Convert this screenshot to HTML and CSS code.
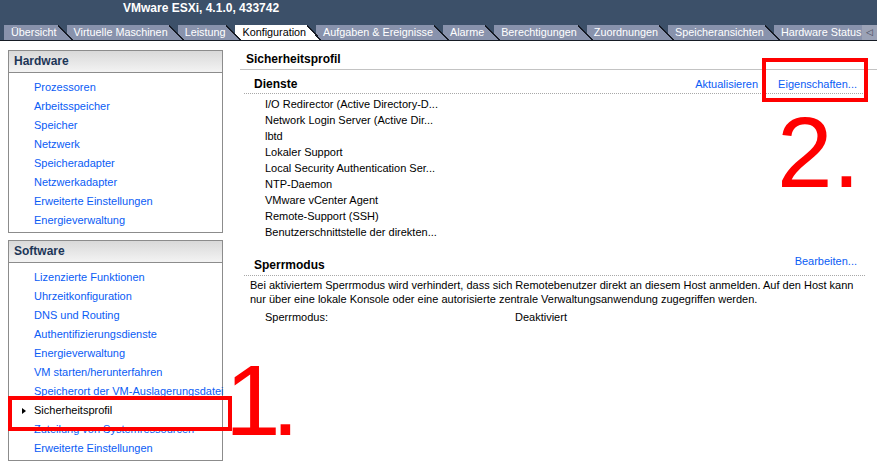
FILE: index.html
```html
<!DOCTYPE html>
<html lang="de">
<head>
  <meta charset="UTF-8">
  <meta name="viewport" content="width=device-width, initial-scale=1.0">
  <title>Sicherheitsprofil</title>
  <link rel="stylesheet" href="styles.css">
</head>
<body>
  <header class="topbar">
    <div class="app-title">VMware ESXi, 4.1.0, 433742</div>
    <div class="tabstrip">
      <ul class="tabs">
        <li class="tab">Übersicht</li>
        <li class="tab">Virtuelle Maschinen</li>
        <li class="tab">Leistung</li>
        <li class="tab active">Konfiguration</li>
        <li class="tab">Aufgaben &amp; Ereignisse</li>
        <li class="tab">Alarme</li>
        <li class="tab">Berechtigungen</li>
        <li class="tab">Zuordnungen</li>
        <li class="tab">Speicheransichten</li>
        <li class="tab">Hardware Status</li>
      </ul>
      <div class="tab-scroll">◁</div>
    </div>
  </header>

  <div class="page">
    <aside class="sidebar">
      <div class="box">
        <h2 class="box-title">Hardware</h2>
        <ul class="box-list">
          <li><a href="#">Prozessoren</a></li>
          <li><a href="#">Arbeitsspeicher</a></li>
          <li><a href="#">Speicher</a></li>
          <li><a href="#">Netzwerk</a></li>
          <li><a href="#">Speicheradapter</a></li>
          <li><a href="#">Netzwerkadapter</a></li>
          <li><a href="#">Erweiterte Einstellungen</a></li>
          <li><a href="#">Energieverwaltung</a></li>
        </ul>
      </div>
      <div class="box">
        <h2 class="box-title">Software</h2>
        <ul class="box-list">
          <li><a href="#">Lizenzierte Funktionen</a></li>
          <li><a href="#">Uhrzeitkonfiguration</a></li>
          <li><a href="#">DNS und Routing</a></li>
          <li><a href="#">Authentifizierungsdienste</a></li>
          <li><a href="#">Energieverwaltung</a></li>
          <li><a href="#">VM starten/herunterfahren</a></li>
          <li><a href="#">Speicherort der VM-Auslagerungsdatei</a></li>
          <li class="selected">Sicherheitsprofil</li>
          <li><a href="#">Zuteilung von Systemressourcen</a></li>
          <li><a href="#">Erweiterte Einstellungen</a></li>
        </ul>
      </div>
    </aside>

    <main class="content">
      <h1 class="page-title">Sicherheitsprofil</h1>

      <section class="panel">
        <div class="panel-head">
          <h2 class="panel-title">Dienste</h2>
          <div class="panel-links">
            <a href="#">Aktualisieren</a>
            <a href="#">Eigenschaften...</a>
          </div>
        </div>
        <ul class="service-list">
          <li>I/O Redirector (Active Directory-D...</li>
          <li>Network Login Server (Active Dir...</li>
          <li>lbtd</li>
          <li>Lokaler Support</li>
          <li>Local Security Authentication Ser...</li>
          <li>NTP-Daemon</li>
          <li>VMware vCenter Agent</li>
          <li>Remote-Support (SSH)</li>
          <li>Benutzerschnittstelle der direkten...</li>
        </ul>
      </section>

      <section class="panel lockdown">
        <div class="panel-head">
          <h2 class="panel-title">Sperrmodus</h2>
          <div class="panel-links">
            <a href="#">Bearbeiten...</a>
          </div>
        </div>
        <p class="panel-text">Bei aktiviertem Sperrmodus wird verhindert, dass sich Remotebenutzer direkt an diesem Host anmelden. Auf den Host kann nur über eine lokale Konsole oder eine autorisierte zentrale Verwaltungsanwendung zugegriffen werden.</p>
        <div class="prop-row">
          <span class="prop-name">Sperrmodus:</span>
          <span class="prop-value">Deaktiviert</span>
        </div>
      </section>
    </main>
  </div>

  <!-- annotations drawn on top of the screenshot -->
  <div class="mark-box mark-box-1"></div>
  <div class="mark mark-1">1.</div>
  <div class="mark-box mark-box-2"></div>
  <div class="mark mark-2">2.</div>
</body>
</html>
```

FILE: styles.css
```css
*{
  padding: 0;
  margin: 0;
  box-sizing: border-box;
}
html{
  background: #fff;
}
body{
  font-family: "Liberation Sans", Arial, sans-serif;
  font-size: 11px;
  color: #000;
  position: relative;
  min-height: 474px;
  overflow: hidden;
}
ul{
  list-style: none;
}
a{
  color: #0a5cf5;
  text-decoration: none;
}

/* top bar + tabs */
.topbar{
  background: #3c5069;
}
.app-title{
  height: 25px;
  line-height: 16px;
  padding-left: 123px;
  color: #fff;
  font-weight: bold;
  font-size: 12px;
}
.tabstrip{
  display: flex;
  height: 16px;
  border-bottom: 1px solid #161b24;
}
.tabs{
  flex: 1;
  display: flex;
  align-items: flex-start;
  padding-left: 4px;
  overflow: hidden;
}
.tab{
  position: relative;
  flex-shrink: 0;
  height: 15px;
  line-height: 15px;
  padding: 0 1px 0 7px;
  margin-right: 9px;
  background: #8892ac;
  color: #fff;
  font-size: 10.8px;
  white-space: nowrap;
}
.tab::after{
  content: "";
  position: absolute;
  top: 0;
  right: -15px;
  width: 15px;
  height: 100%;
  z-index: 1;
  background: linear-gradient(to top right, #8892ac calc(50% - 1px), #151a24 calc(50% - 1px), #151a24 calc(50% + .5px), transparent calc(50% + .5px));
}
.tab.active{
  height: 16px;
  background: #fff;
  color: #000;
}
.tab.active::after{
  background: linear-gradient(to top right, #fff calc(50% - 1px), #151a24 calc(50% - 1px), #151a24 calc(50% + .5px), transparent calc(50% + .5px));
}
.tab-scroll{
  width: 15px;
  height: 15px;
  line-height: 15px;
  background: #9ba2b6;
  color: #3c4150;
  font-family: "DejaVu Sans", sans-serif;
  font-size: 9px;
  text-align: center;
}

/* page */
.page{
  display: flex;
}
.sidebar{
  width: 215px;
  margin: 9px 17px 0 8px;
}
.box{
  border: 1px solid #8c8c8c;
  margin-bottom: 7px;
}
.box-title{
  height: 22px;
  line-height: 21px;
  padding-left: 5px;
  border-bottom: 1px solid #8c8c8c;
  background: linear-gradient(#d9d9d9, #f3f3f3);
  color: #1d3657;
  font-size: 12px;
}
.box-list{
  padding: 5px 0 2px;
}
.box-list li{
  position: relative;
  line-height: 19px;
  padding-left: 25px;
  white-space: nowrap;
}
.box-list .selected::before{
  content: "";
  position: absolute;
  left: 13px;
  top: 7px;
  border-left: 4px solid #000;
  border-top: 3px solid transparent;
  border-bottom: 3px solid transparent;
}

.content{
  flex: 1;
  margin-top: 10px;
}
.page-title{
  font-size: 12px;
  line-height: 16px;
  padding: 0 6px 2px;
  border-bottom: 1px solid #c3c3c3;
}
.panel{
  margin: 6px 12px 0 4px;
}
.panel-head{
  display: flex;
  justify-content: space-between;
  align-items: flex-start;
  padding: 0 8px 1px 10px;
  border-bottom: 1px dotted #a8a8a8;
}
.panel-title{
  font-size: 12px;
  line-height: 16px;
}
.panel-links{
  display: flex;
  gap: 20px;
  line-height: 16px;
}
.service-list{
  padding: 2px 0 0 21px;
}
.service-list li{
  line-height: 16px;
}
.lockdown{
  margin-top: 13px;
}
.lockdown .panel-title{
  padding-top: 4px;
}
.lockdown .panel-head{
  padding-bottom: 2px;
}
.panel-text{
  line-height: 14px;
  padding: 2px 0 0 6px;
  max-width: 610px;
}
.prop-row{
  display: flex;
  line-height: 16px;
  margin-top: 3px;
  padding-left: 21px;
}
.prop-name{
  width: 250px;
}

/* red annotations */
.mark-box{
  position: absolute;
  border: 4px solid #f00;
}
.mark-box-1{
  left: 8px;
  top: 396px;
  width: 224px;
  height: 35px;
}
.mark-box-2{
  left: 762px;
  top: 58px;
  width: 106px;
  height: 44px;
}
.mark{
  position: absolute;
  color: #f00;
  font-size: 100px;
  line-height: 100px;
}
.mark-1{
  left: 225px;
  top: 350px;
  letter-spacing: -9px;
}
.mark-2{
  left: 777px;
  top: 102px;
}
```
